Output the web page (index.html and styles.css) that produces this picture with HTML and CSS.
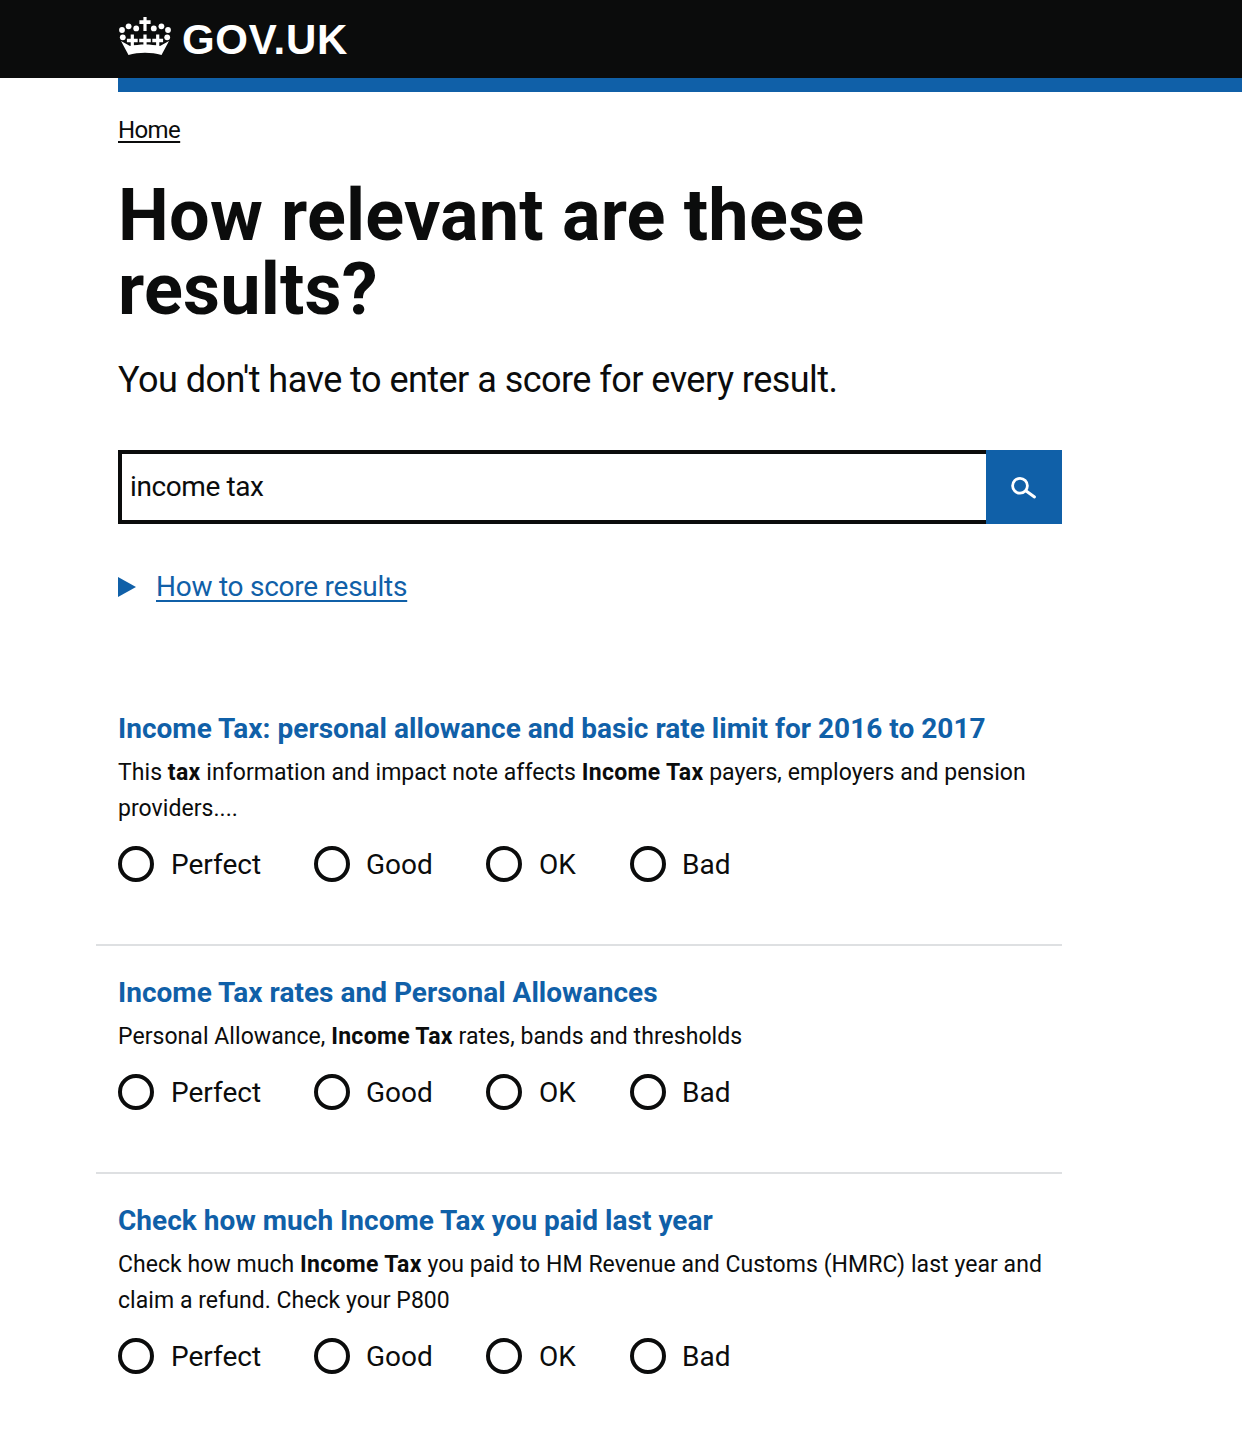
FILE: index.html
```html
<!DOCTYPE html>
<html lang="en">
<head>
<meta charset="utf-8">
<title>How relevant are these results?</title>
<link rel="stylesheet" href="styles.css">
</head>
<body>
<header class="site-header">
  <div class="logo">
    <svg class="crown" viewBox="0 0 52 38" width="52" height="38" aria-hidden="true">
      <g fill="#fff">
        <path d="M24.400 0h3.200v3.300h4v3.600h-4v7h-3.200v-7h-4V3.300h4z"/>
        <circle cx="3" cy="13" r="2.900"/><circle cx="49" cy="13" r="2.900"/>
        <circle cx="9.600" cy="9.300" r="2.900"/><circle cx="42.400" cy="9.300" r="2.900"/>
        <circle cx="17.200" cy="11.400" r="2.900"/><circle cx="34.800" cy="11.400" r="2.900"/>
        <circle cx="3.800" cy="20.300" r="2.900"/><circle cx="48.200" cy="20.300" r="2.900"/>
        <path d="M24.400 17.500h3.200v4.300h4.200v3.400h-4.200V31h-3.200v-5.800h-4.200v-3.400h4.200z"/>
        <path d="M11.700 17.500h3.200v4.300h3.800v3.400h-3.800V31h-3.200v-5.800H7.900v-3.400h3.800z"/>
        <path d="M37.100 17.500h3.200v4.300h3.800v3.400h-3.800V31h-3.200v-5.800h-3.800v-3.400h3.800z"/>
        <path d="M2 24l9 5c4.800-1 9.800-1.500 15-1.500s10.200.5 15 1.500l9-5-7.500 14c-5-1.500-10.800-2.200-16.500-2.200S14.500 36.500 9.500 38z"/>
      </g>
    </svg>
    <span class="wordmark">GOV.UK</span>
  </div>
</header>
<div class="header-rule"></div>

<main class="page">
  <nav class="breadcrumb"><a href="#">Home</a></nav>
  <h1 class="title">How relevant are these results?</h1>
  <p class="lead">You don't have to enter a score for every result.</p>

  <form class="search">
    <input class="search-input" type="text" value="income tax" aria-label="Search">
    <button class="search-button" type="button" aria-label="Search">
      <svg viewBox="0 0 28 28" width="28" height="28" aria-hidden="true">
        <circle cx="10" cy="12.800" r="7.400" fill="none" stroke="#fff" stroke-width="2.800"/>
        <path d="M16.500 18.300l8 5.700" fill="none" stroke="#fff" stroke-width="3" stroke-linecap="round"/>
      </svg>
    </button>
  </form>

  <div class="details">
    <span class="details-arrow"></span>
    <a class="details-link" href="#">How to score results</a>
  </div>

  <section class="results">
    <article class="result">
      <h2 class="result-title"><a href="#">Income Tax: personal allowance and basic rate limit for 2016 to 2017</a></h2>
      <p class="result-text">This <b>tax</b> information and impact note affects <b>Income Tax</b> payers, employers and pension providers....</p>
      <div class="scores">
        <label class="score score-perfect"><span class="radio"></span><span class="score-label">Perfect</span></label>
        <label class="score score-good"><span class="radio"></span><span class="score-label">Good</span></label>
        <label class="score score-ok"><span class="radio"></span><span class="score-label">OK</span></label>
        <label class="score score-bad"><span class="radio"></span><span class="score-label">Bad</span></label>
      </div>
    </article>
    <article class="result">
      <h2 class="result-title"><a href="#">Income Tax rates and Personal Allowances</a></h2>
      <p class="result-text">Personal Allowance, <b>Income Tax</b> rates, bands and thresholds</p>
      <div class="scores">
        <label class="score score-perfect"><span class="radio"></span><span class="score-label">Perfect</span></label>
        <label class="score score-good"><span class="radio"></span><span class="score-label">Good</span></label>
        <label class="score score-ok"><span class="radio"></span><span class="score-label">OK</span></label>
        <label class="score score-bad"><span class="radio"></span><span class="score-label">Bad</span></label>
      </div>
    </article>
    <article class="result">
      <h2 class="result-title"><a href="#">Check how much Income Tax you paid last year</a></h2>
      <p class="result-text">Check how much <b>Income Tax</b> you paid to HM Revenue and Customs (HMRC) last year and claim a refund. Check your P800</p>
      <div class="scores">
        <label class="score score-perfect"><span class="radio"></span><span class="score-label">Perfect</span></label>
        <label class="score score-good"><span class="radio"></span><span class="score-label">Good</span></label>
        <label class="score score-ok"><span class="radio"></span><span class="score-label">OK</span></label>
        <label class="score score-bad"><span class="radio"></span><span class="score-label">Bad</span></label>
      </div>
    </article>
  </section>
</main>
</body>
</html>
```
FILE: styles.css
```css
* { box-sizing: border-box; }
html, body { margin: 0; padding: 0; }
body {
  background: #fff;
  color: #0b0c0c;
  font-family: Roboto, "Liberation Sans", sans-serif;
}
a { color: inherit; }

.site-header {
  height: 78px;
  background: #0b0c0c;
  padding: 17px 0 0 119px;
}
.logo { display: flex; align-items: flex-start; gap: 11px; color: #fff; }
.crown { display: block; }
.wordmark {
  font-family: "Liberation Sans", Arial, sans-serif;
  font-weight: 700;
  font-size: 42px;
  line-height: 46px;
  letter-spacing: 0.7px;
}
.header-rule { height: 14px; margin-left: 118px; background: #1060a8; }

.page { padding: 0 0 0 118px; width: 1062px; }

.breadcrumb { padding-top: 24px; font-size: 24px; line-height: 28px; height: 54px; letter-spacing: -0.6px; }
.breadcrumb a { color: #0b0c0c; text-underline-offset: 3px; }

.title {
  margin: 33px 0 0;
  width: 800px;
  font-size: 72px;
  line-height: 74px;
  font-weight: 700;
  letter-spacing: 0.2px;
}
.lead {
  margin: 30px 0 0;
  font-size: 36px;
  line-height: 46px;
  letter-spacing: -0.53px;
}

.search { display: flex; height: 74px; width: 944px; margin-top: 47px; }
.search-input {
  flex: 1;
  min-width: 0;
  height: 74px;
  border: 4px solid #0b0c0c;
  border-right: 0;
  padding: 0 8px 2px;
  font-family: inherit;
  font-size: 28px;
  letter-spacing: -0.4px;
  color: #0b0c0c;
  outline: none;
  background: #fff;
}
.search-button {
  width: 76px;
  height: 74px;
  border: 0;
  padding: 0;
  background: #1060a8;
  display: flex;
  align-items: center;
  justify-content: center;
}

.details { display: flex; align-items: center; gap: 20px; margin-top: 46px; height: 34px; }
.details-arrow {
  width: 0;
  height: 0;
  border-style: solid;
  border-width: 10px 0 10px 18px;
  border-color: transparent transparent transparent #1060a8;
}
.details-link {
  color: #1060a8;
  font-size: 28px;
  line-height: 34px;
  text-decoration-thickness: 2px;
  text-underline-offset: 4px;
  letter-spacing: -0.25px;
}

.results { margin-top: 107px; margin-left: -22px; }
.result { padding: 0 0 62px 22px; border-bottom: 2px solid #dee0e2; }
.result + .result { padding-top: 29px; }
.result:last-child { border-bottom: 0; }
.result-title {
  margin: 0;
  font-size: 28px;
  line-height: 36px;
  font-weight: 700;
  letter-spacing: 0.02px;
}
.result-title a { color: #1060a8; text-decoration: none; }
.result-text {
  margin: 8px 0 0;
  width: 944px;
  font-size: 23px;
  line-height: 36px;
  letter-spacing: 0.05px;
}
.result-text b { font-weight: 700; letter-spacing: 0.3px; }

.scores { display: flex; margin-top: 19px; height: 36px; }
.score {
  display: flex;
  align-items: center;
  gap: 17px;
  font-size: 28px;
  line-height: 36px;
}
.score-label { padding-top: 2px; }
.score-perfect { width: 196px; }
.score-good { width: 172px; }
.score-ok { width: 144px; }
.score-good .score-label, .score-bad .score-label { margin-left: -1px; }
.radio {
  width: 36px;
  height: 36px;
  border: 4px solid #0b0c0c;
  border-radius: 50%;
  flex: none;
  background: #fff;
}
```
